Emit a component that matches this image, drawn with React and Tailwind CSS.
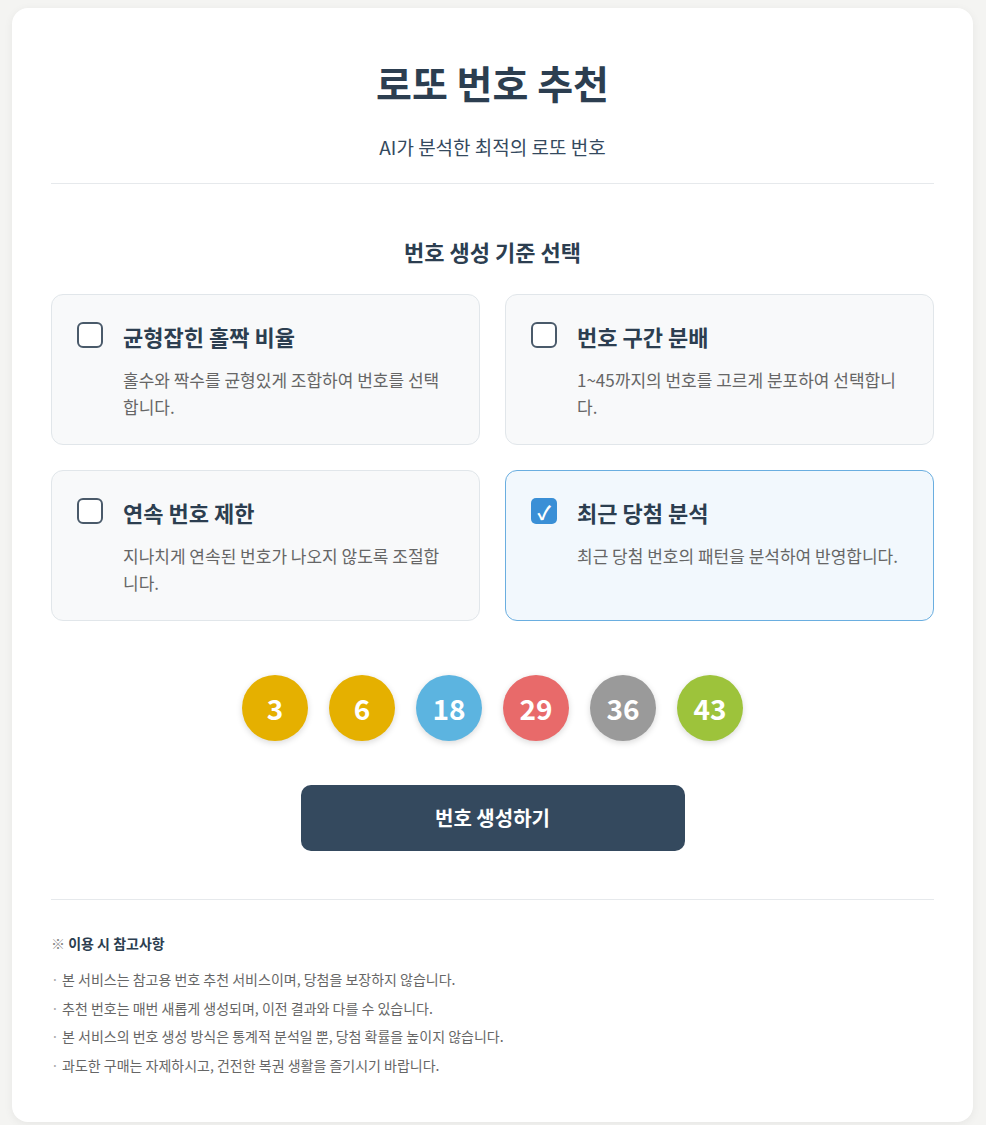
import React, { useState } from 'react';

const OPTIONS = [
  { id: 'oddeven', title: '균형잡힌 홀짝 비율', desc: '홀수와 짝수를 균형있게 조합하여 번호를 선택합니다.' },
  { id: 'range', title: '번호 구간 분배', desc: '1~45까지의 번호를 고르게 분포하여 선택합니다.' },
  { id: 'consecutive', title: '연속 번호 제한', desc: '지나치게 연속된 번호가 나오지 않도록 조절합니다.' },
  { id: 'recent', title: '최근 당첨 분석', desc: '최근 당첨 번호의 패턴을 분석하여 반영합니다.' },
];

const NOTES = [
  '본 서비스는 참고용 번호 추천 서비스이며, 당첨을 보장하지 않습니다.',
  '추천 번호는 매번 새롭게 생성되며, 이전 결과와 다를 수 있습니다.',
  '본 서비스의 번호 생성 방식은 통계적 분석일 뿐, 당첨 확률을 높이지 않습니다.',
  '과도한 구매는 자제하시고, 건전한 복권 생활을 즐기시기 바랍니다.',
];

const ballColor = n => {
  if (n <= 10) return 'bg-[#e5b000]';
  if (n <= 20) return 'bg-[#5cb4e0]';
  if (n <= 30) return 'bg-[#e86a6a]';
  if (n <= 40) return 'bg-[#9a9a9a]';
  return 'bg-[#9dc33b]';
};

const App = () => {
  const [selected, setSelected] = useState({ recent: true });
  const [numbers] = useState([3, 6, 18, 29, 36, 43]);

  const toggle = id => setSelected(s => ({ ...s, [id]: !s[id] }));

  return (
    <div
      className="min-h-[1125px] bg-[#f4f4f2] pt-2 pb-1"
      style={{ fontFamily: '"Noto Sans CJK KR", "Noto Sans", sans-serif' }}
    >
      <div className="ml-3 mr-[13px] bg-white rounded-2xl shadow-[0_2px_10px_rgba(0,0,0,0.06)] px-[39px] pt-[52px] pb-[43px]">
        {/* Header */}
        <div className="text-center pb-[23px] border-b border-[#e6e9ec]">
          <h1 className="text-[39px] leading-[44px] font-bold text-[#2c3e50]">로또 번호 추천</h1>
          <p className="mt-[30px] text-[19px] leading-[26px] text-[#34495e]">AI가 분석한 최적의 로또 번호</p>
        </div>

        {/* Options */}
        <h2 className="mt-[53px] text-center text-[22px] leading-[28px] font-bold text-[#2c3e50]">번호 생성 기준 선택</h2>
        <div className="mt-[29px] grid grid-cols-2 gap-[25px]">
          {OPTIONS.map(opt => {
            const on = !!selected[opt.id];
            return (
              <button
                key={opt.id}
                onClick={() => toggle(opt.id)}
                className={`flex items-start text-left rounded-xl border pl-[25px] pr-[26px] pt-[27px] pb-[24px] ${
                  on ? 'border-[#6aaee0] bg-[#f2f8fd]' : 'border-[#e1e6ea] bg-[#f8f9fa]'
                }`}
              >
                {on ? (
                  <span className="shrink-0 w-[26px] h-[26px] rounded-[5px] bg-[#3a8fd6] flex items-center justify-center text-white text-[19px] font-bold leading-none">
                    ✓
                  </span>
                ) : (
                  <span className="shrink-0 w-[26px] h-[26px] rounded-[6px] border-2 border-[#4a5a6a] bg-white" />
                )}
                <div className="ml-5 flex-1">
                  <div className="text-[22px] leading-[28px] font-bold text-[#2c3e50]">{opt.title}</div>
                  <p className="mt-4 text-[17px] leading-[27px] text-[#666]">{opt.desc}</p>
                </div>
              </button>
            );
          })}
        </div>

        {/* Balls */}
        <div className="mt-[54px] flex justify-center gap-[21px]">
          {numbers.map(n => (
            <div
              key={n}
              className={`w-[66px] h-[66px] rounded-full flex items-center justify-center text-white text-[28px] font-bold shadow-[0_2px_6px_rgba(0,0,0,0.15)] ${ballColor(n)}`}
            >
              {n}
            </div>
          ))}
        </div>

        <div className="mt-[44px] flex justify-center">
          <button className="w-[384px] h-[66px] rounded-[10px] bg-[#34495e] text-white text-[20px] font-bold">
            번호 생성하기
          </button>
        </div>

        {/* Notes */}
        <div className="mt-[48px] border-t border-[#e6e9ec] pt-[33px]">
          <div className="text-[14px] leading-[20px] font-bold text-[#2c3e50]">
            <span className="text-[#888] font-normal">※</span> 이용 시 참고사항
          </div>
          <ul className="mt-3">
            {NOTES.map(note => (
              <li key={note} className="flex text-[14px] leading-[28.5px] text-[#666]">
                <span className="w-[11px] shrink-0 text-[#aaa]">·</span>
                <span>{note}</span>
              </li>
            ))}
          </ul>
        </div>
      </div>
    </div>
  );
};

export default App;
